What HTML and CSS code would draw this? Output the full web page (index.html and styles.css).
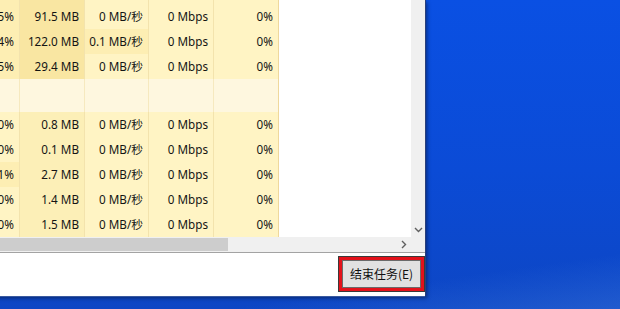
FILE: index.html
```html
<!DOCTYPE html>
<html lang="zh-CN">
<head>
<meta charset="utf-8">
<title>任务管理器</title>
<link rel="stylesheet" href="styles.css">
</head>
<body>
<div class="window">
  <div class="main">
    <div class="viewport">
      <div class="row spacer">
        <div class="cell h2"></div><div class="cell h3"></div><div class="cell h1"></div><div class="cell h1"></div><div class="cell h1 last"></div>
      </div>
      <div class="row">
        <div class="cell h2">0.5%</div><div class="cell h3">91.5 MB</div><div class="cell h1">0 MB/秒</div><div class="cell h1">0 Mbps</div><div class="cell h1 last">0%</div>
      </div>
      <div class="row">
        <div class="cell h2">0.4%</div><div class="cell h3">122.0 MB</div><div class="cell h2">0.1 MB/秒</div><div class="cell h1">0 Mbps</div><div class="cell h1 last">0%</div>
      </div>
      <div class="row">
        <div class="cell h2">0.5%</div><div class="cell h3">29.4 MB</div><div class="cell h1">0 MB/秒</div><div class="cell h1">0 Mbps</div><div class="cell h1 last">0%</div>
      </div>
      <div class="row group">
        <div class="cell g"></div><div class="cell g"></div><div class="cell g"></div><div class="cell g"></div><div class="cell g last"></div>
      </div>
      <div class="row">
        <div class="cell h1">0%</div><div class="cell hm">0.8 MB</div><div class="cell h1">0 MB/秒</div><div class="cell h1">0 Mbps</div><div class="cell h1 last">0%</div>
      </div>
      <div class="row">
        <div class="cell h1">0%</div><div class="cell hm">0.1 MB</div><div class="cell h1">0 MB/秒</div><div class="cell h1">0 Mbps</div><div class="cell h1 last">0%</div>
      </div>
      <div class="row">
        <div class="cell h2">0.1%</div><div class="cell hm">2.7 MB</div><div class="cell h1">0 MB/秒</div><div class="cell h1">0 Mbps</div><div class="cell h1 last">0%</div>
      </div>
      <div class="row">
        <div class="cell h1">0%</div><div class="cell hm">1.4 MB</div><div class="cell h1">0 MB/秒</div><div class="cell h1">0 Mbps</div><div class="cell h1 last">0%</div>
      </div>
      <div class="row">
        <div class="cell h1">0%</div><div class="cell hm">1.5 MB</div><div class="cell h1">0 MB/秒</div><div class="cell h1">0 Mbps</div><div class="cell h1 last">0%</div>
      </div>
    </div>
    <div class="vscroll">
      <div class="vbtn">
        <svg width="9" height="6" viewBox="0 0 9 6"><path d="M1 1 L4.5 4.5 L8 1" fill="none" stroke="#606060" stroke-width="1.4"/></svg>
      </div>
    </div>
    <div class="hscroll">
      <div class="thumb"></div>
      <div class="hbtn">
        <svg width="6" height="9" viewBox="0 0 6 9"><path d="M1 1 L4.5 4.5 L1 8" fill="none" stroke="#606060" stroke-width="1.4"/></svg>
      </div>
    </div>
    <div class="corner"></div>
  </div>
  <div class="footer">
    <div class="mark">
      <button class="btn" type="button">结束任务(E)</button>
    </div>
  </div>
</div>
</body>
</html>
```

FILE: styles.css
```css
html, body {
  margin: 0;
  padding: 0;
}

body {
  width: 620px;
  height: 309px;
  overflow: hidden;
  background:
    linear-gradient(172deg, rgba(0,0,0,0) 86%, rgba(70,130,225,0.35) 100%),
    linear-gradient(180deg, #0a50e3 0%, #0b4bd6 55%, #0d46c4 100%);
  font-family: "Noto Sans", "Noto Sans CJK SC", sans-serif;
}

.window {
  margin-left: -46px;
  width: 471px;
  height: 296px;
  background: #ffffff;
  display: flex;
  flex-direction: column;
  box-shadow: 1px 0 0 #2a3f7a, 0 1px 0 #3a5aa0, 2px 2px 4px rgba(0, 0, 0, 0.45);
}

.main {
  display: grid;
  grid-template-columns: 1fr 14px;
  grid-template-rows: 237px 15px;
}

.viewport {
  overflow: hidden;
  background: #ffffff;
}

.row {
  display: grid;
  grid-template-columns: 66px 65px 64px 65px 65px;
  height: 25px;
}

.row.spacer {
  height: 4px;
}

.row.group {
  height: 33px;
}

.cell {
  border-right: 1px solid #f3e3ad;
  text-align: right;
  padding-right: 5px;
  font-size: 11.7px;
  line-height: 25px;
  color: #141414;
  white-space: nowrap;
  overflow: hidden;
}

.cell.last {
  border-right-color: #efd89c;
}

.h1 { background: #fff4c4; }
.h2 { background: #fdeeb3; }
.hm { background: #fcefb7; }
.h3 { background: #f9e6a2; }
.g  { background: #fef7df; border-right-color: #f6e9bf; }

.vscroll {
  background: #f0f0f0;
  display: flex;
  flex-direction: column;
  justify-content: flex-end;
}

.vbtn {
  height: 15px;
  display: flex;
  align-items: center;
  justify-content: center;
}

.vbtn svg, .hbtn svg {
  display: block;
}

.hscroll {
  background: #f0f0f0;
  display: flex;
  align-items: stretch;
}

.thumb {
  width: 274px;
  margin: 1px 0 1px 0;
  background: #cdcdcd;
}

.hbtn {
  margin-left: auto;
  width: 15px;
  display: flex;
  align-items: center;
  justify-content: center;
}

.corner {
  background: #f0f0f0;
}

.footer {
  flex: 1;
  border-top: 1px solid #a3a3a3;
  display: flex;
  justify-content: flex-end;
  align-items: flex-start;
  padding: 4px 1px 0 0;
}

.mark {
  border: 3px solid #e3121b;
  box-shadow: 0 0 0 1px #3a3a3a;
  display: flex;
}

.btn {
  width: 79px;
  height: 28px;
  margin: 0;
  padding: 0;
  border: 1px solid #6a6a6a;
  background: #e1e1e1;
  color: #111111;
  font-family: "Noto Sans CJK SC", "Noto Sans", sans-serif;
  font-size: 12px;
  line-height: 26px;
  text-align: center;
}
```
